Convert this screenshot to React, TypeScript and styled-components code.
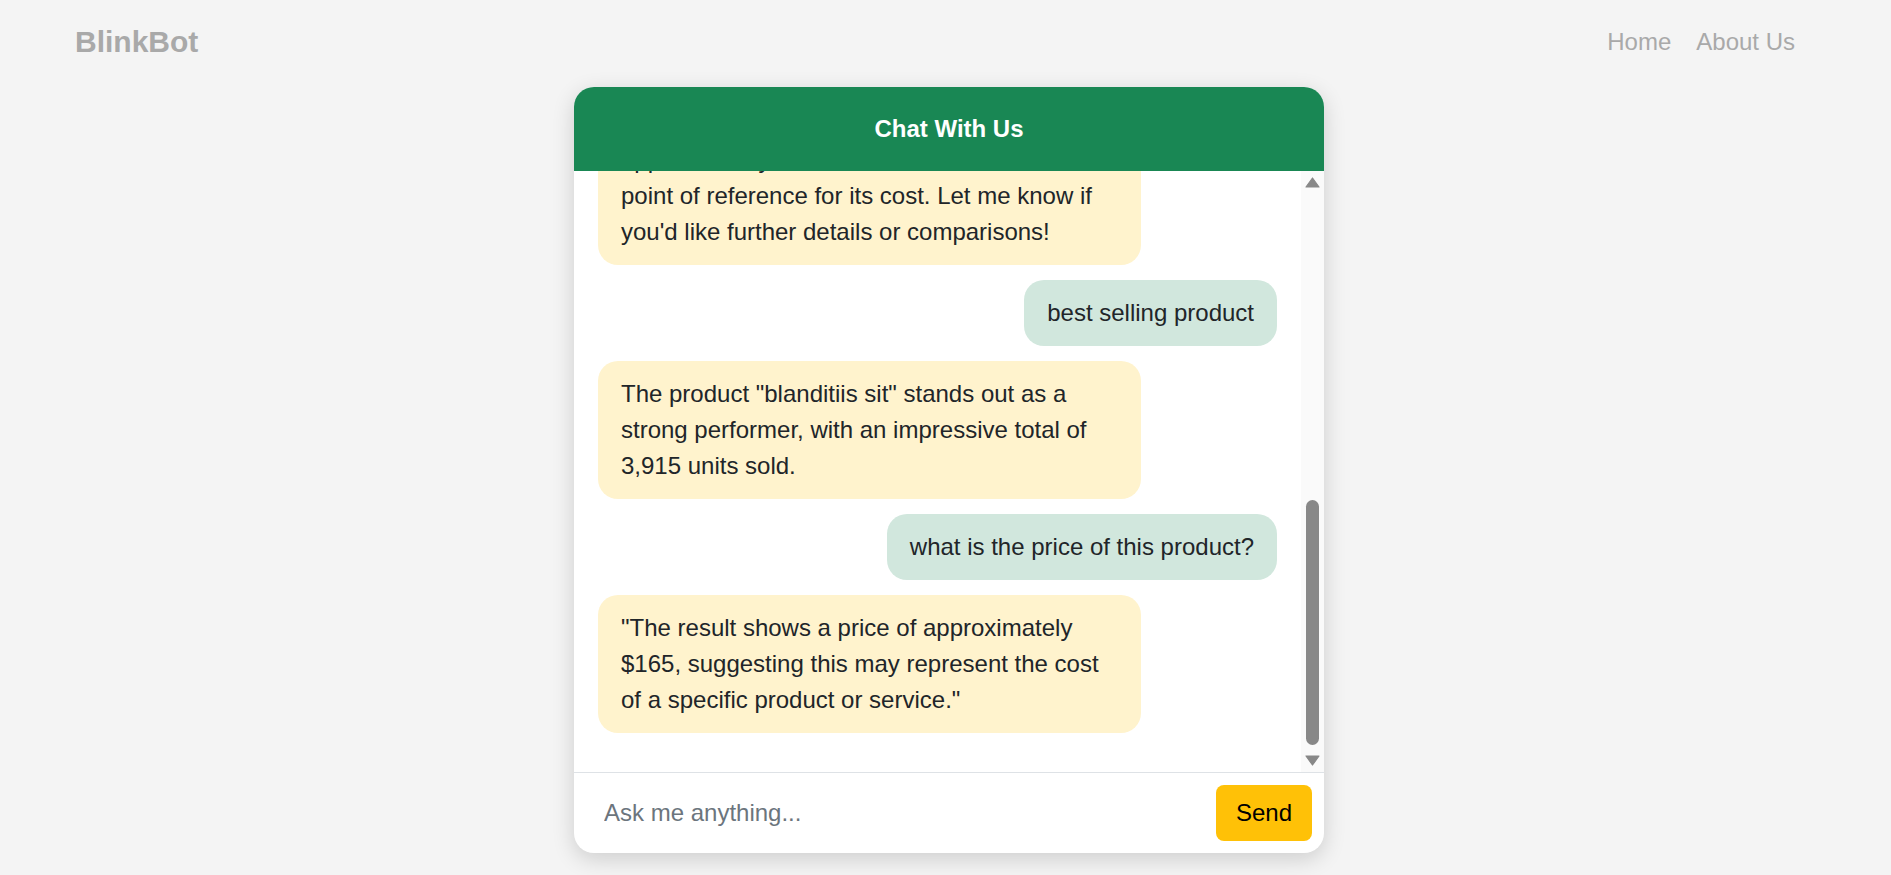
import React, { useCallback, useLayoutEffect, useRef, useState } from "react";
import styled, { createGlobalStyle } from "styled-components";

const GlobalStyle = createGlobalStyle`
  html, body {
    margin: 0;
    padding: 0;
    background: #f4f4f4;
    font-family: "Liberation Sans", Arial, Helvetica, sans-serif;
    color: #212529;
  }
  * { box-sizing: border-box; }
`;

const Page = styled.div`
  min-height: 875px;
  display: flex;
  flex-direction: column;
`;

const NavBar = styled.header`
  height: 83px;
  display: flex;
  align-items: center;
  justify-content: space-between;
  padding: 0 96px 0 75px;
`;

const Brand = styled.div`
  font-size: 30px;
  font-weight: 700;
  color: #a9a9a9;
`;

const NavLinks = styled.nav`
  display: flex;
  gap: 25px;
`;

const NavLink = styled.a`
  font-size: 24px;
  color: #a9a9a9;
  text-decoration: none;
`;

const Main = styled.main`
  display: flex;
  justify-content: center;
  padding: 4px 0 0 7px;
`;

const ChatBox = styled.section`
  width: 750px;
  height: 766px;
  background: #fff;
  border-radius: 20px;
  overflow: hidden;
  display: flex;
  flex-direction: column;
  box-shadow: 0 6px 22px rgba(0, 0, 0, 0.16);
`;

const ChatHeader = styled.div`
  height: 84px;
  flex: none;
  background: #198754;
  color: #fff;
  display: flex;
  align-items: center;
  justify-content: center;
  font-size: 24px;
  font-weight: 700;
`;

const MessagePane = styled.div`
  flex: 1;
  min-height: 0;
  display: flex;
`;

const Messages = styled.div`
  flex: 1;
  overflow-y: auto;
  background: #fff;
  scrollbar-width: none;
  &::-webkit-scrollbar {
    display: none;
  }
`;

const ScrollTrack = styled.div`
  width: 23px;
  flex: none;
  background: #fafafa;
  display: flex;
  flex-direction: column;
`;

const ScrollButton = styled.div`
  height: 23px;
  flex: none;
  display: flex;
  align-items: center;
  justify-content: center;
`;

const ScrollRail = styled.div`
  flex: 1;
  position: relative;
`;

const ScrollThumb = styled.div`
  position: absolute;
  left: 5px;
  right: 5px;
  background: #888;
  border-radius: 7px;
`;

const MessageList = styled.div`
  display: flex;
  flex-direction: column;
  gap: 15px;
  padding: 24px 24px 39px;
`;

const Row = styled.div<{ $from: "user" | "bot" }>`
  display: flex;
  justify-content: ${(p) => (p.$from === "user" ? "flex-end" : "flex-start")};
`;

const Bubble = styled.div<{ $from: "user" | "bot" }>`
  max-width: 80%;
  padding: 15px 23px;
  border-radius: 20px;
  font-size: 24px;
  line-height: 36px;
  color: #212529;
  background: ${(p) => (p.$from === "user" ? "#d1e7dd" : "#fff3cd")};
`;

const InputBar = styled.form`
  flex: none;
  display: flex;
  align-items: center;
  gap: 12px;
  padding: 12px;
  border-top: 1px solid #dee2e6;
`;

const TextInput = styled.input`
  flex: 1;
  height: 55px;
  border: none;
  outline: none;
  padding: 0 18px;
  font-family: inherit;
  font-size: 24px;
  color: #212529;
  background: transparent;
  &::placeholder {
    color: #6c757d;
  }
`;

const SendButton = styled.button`
  height: 56px;
  padding: 0 20px;
  border: none;
  border-radius: 8px;
  background: #ffc107;
  color: #000;
  font-family: inherit;
  font-size: 24px;
  cursor: pointer;
`;

type Msg = { from: "user" | "bot"; text: string };

const messages: Msg[] = [
  {
    from: "bot",
    text: "Hello! I'm BlinkBot. Ask me anything about your products, orders or sales and I'll find the answer for you.",
  },
  { from: "user", text: "how many orders this month?" },
  {
    from: "bot",
    text: "This month there have been 1,248 orders placed so far, which is an increase of about 12% compared with the same period last month. Most came from returning customers.",
  },
  { from: "user", text: "average order value" },
  { from: "bot", text: "The average order value is $86.40." },
  { from: "user", text: "price of blanditiis sit" },
  {
    from: "bot",
    text: 'The product "blanditiis sit" is priced at approximately $165 and serves as a useful point of reference for its cost. Let me know if you\'d like further details or comparisons!',
  },
  { from: "user", text: "best selling product" },
  {
    from: "bot",
    text: 'The product "blanditiis sit" stands out as a strong performer, with an impressive total of 3,915 units sold.',
  },
  { from: "user", text: "what is the price of this product?" },
  {
    from: "bot",
    text: '"The result shows a price of approximately $165, suggesting this may represent the cost of a specific product or service."',
  },
];

const Arrow = ({ dir }: { dir: "up" | "down" }) => (
  <svg width="15" height="11" viewBox="0 0 15 11">
    <polygon
      points={dir === "up" ? "7.5,1 14,10 1,10" : "1,1 14,1 7.5,10"}
      fill="#888"
      stroke="#888"
      strokeWidth="1.2"
      strokeLinejoin="round"
    />
  </svg>
);

export default function App() {
  const scrollRef = useRef<HTMLDivElement>(null);
  const railRef = useRef<HTMLDivElement>(null);
  const [thumb, setThumb] = useState({ top: 0, height: 0 });

  const update = useCallback(() => {
    const el = scrollRef.current;
    const rail = railRef.current;
    if (!el || !rail) return;
    const railH = rail.clientHeight;
    const h = Math.max(20, railH * (el.clientHeight / el.scrollHeight)) + 2;
    const maxScroll = el.scrollHeight - el.clientHeight;
    const t = maxScroll > 0 ? (el.scrollTop / maxScroll) * (railH - 4 - h) : 0;
    setThumb({ top: t, height: h });
  }, []);

  useLayoutEffect(() => {
    const el = scrollRef.current;
    if (el) el.scrollTop = el.scrollHeight;
    update();
  }, [update]);

  return (
    <Page>
      <GlobalStyle />
      <NavBar>
        <Brand>BlinkBot</Brand>
        <NavLinks>
          <NavLink href="#">Home</NavLink>
          <NavLink href="#">About Us</NavLink>
        </NavLinks>
      </NavBar>
      <Main>
        <ChatBox>
          <ChatHeader>Chat With Us</ChatHeader>
          <MessagePane>
            <Messages ref={scrollRef} onScroll={update}>
              <MessageList>
                {messages.map((m, i) => (
                  <Row key={i} $from={m.from}>
                    <Bubble $from={m.from}>{m.text}</Bubble>
                  </Row>
                ))}
              </MessageList>
            </Messages>
            <ScrollTrack aria-hidden>
              <ScrollButton>
                <Arrow dir="up" />
              </ScrollButton>
              <ScrollRail ref={railRef}>
                <ScrollThumb style={{ top: thumb.top, height: thumb.height }} />
              </ScrollRail>
              <ScrollButton>
                <Arrow dir="down" />
              </ScrollButton>
            </ScrollTrack>
          </MessagePane>
          <InputBar onSubmit={(e) => e.preventDefault()}>
            <TextInput placeholder="Ask me anything..." />
            <SendButton type="submit">Send</SendButton>
          </InputBar>
        </ChatBox>
      </Main>
    </Page>
  );
}
